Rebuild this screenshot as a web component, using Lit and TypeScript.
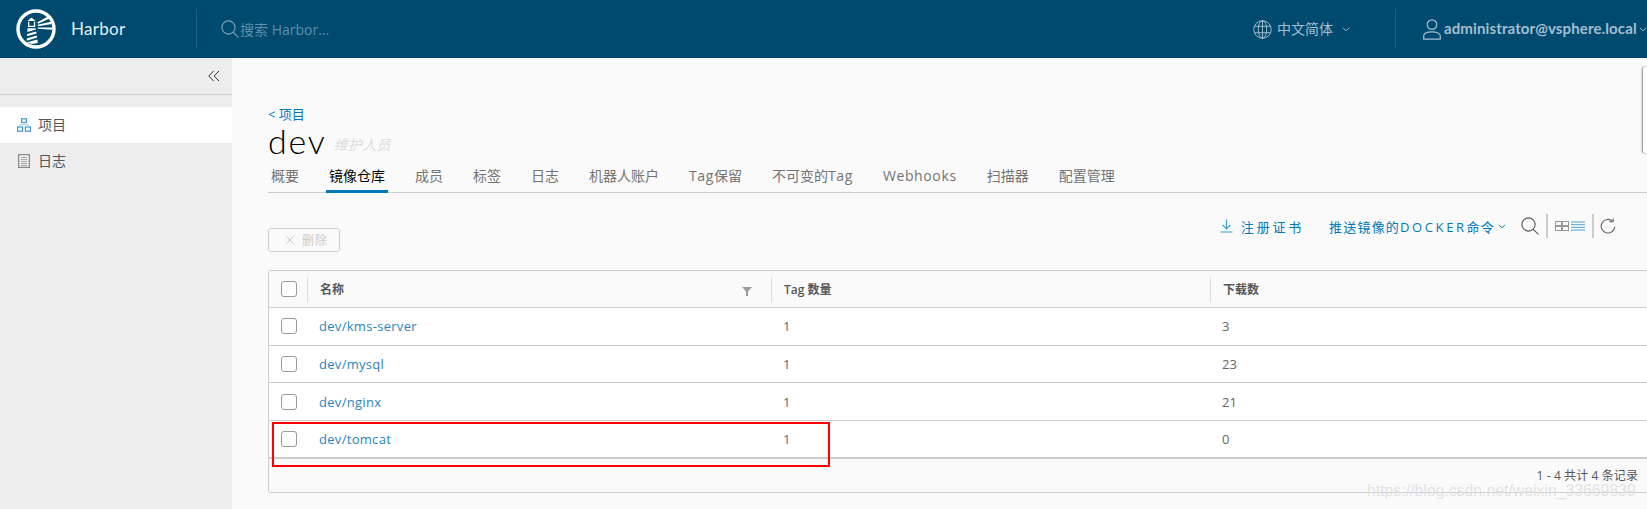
import { LitElement, html, css, svg } from "lit";
import { customElement } from "lit/decorators.js";

const logo = svg`<svg class="logo" width="40" height="40" viewBox="0 0 40 40">
  <circle cx="20" cy="20" r="18" fill="none" stroke="#fff" stroke-width="3.4"/>
  <g fill="#fff">
    <path d="M15.5 8.4 L19.6 12 H11.4 Z"/>
    <path d="M12 12.8 h1.3 v4 h4.6 v-4 h1.3 v5.2 h-7.2 Z"/>
    <path d="M11.6 19.2 h8 l0.3 1.4 l-8.5 2.4 Z"/>
    <path d="M11.2 25 l9 -2.6 l0.4 2 l-9.6 2.8 Z"/>
    <path d="M10.8 29.4 l10 -3 l0.4 2.2 l-10.6 3.1 Z"/>
    <path d="M10.4 33.6 l11 -3.2 l0.4 3.6 l-6 1 Z"/>
    <path d="M21.4 13.2 l10.6 -5.8 l1.6 2 l-11.6 5.4 Z"/>
    <path d="M21.6 15.8 l13.4 -3 l0.8 2.2 l-13.8 2.2 Z"/>
    <path d="M21.6 18.4 l14.6 0 l0 2.4 l-14.4 -1 Z"/>
  </g>
</svg>`;

const searchIcon = (cls: string) => svg`<svg class=${cls} viewBox="0 0 18 18" fill="none" stroke="currentColor" stroke-width="1.1">
  <circle cx="7.5" cy="7.5" r="6.6"/><path d="M12.3 12.3 L17.4 17.4"/>
</svg>`;

const chevron = svg`<svg class="chev" viewBox="0 0 8 5" fill="none" stroke="currentColor" stroke-width="1"><path d="M1 .8 L4 3.8 L7 .8"/></svg>`;

const repos: [string, string, string][] = [
  ["dev/kms-server", "1", "3"],
  ["dev/mysql", "1", "23"],
  ["dev/nginx", "1", "21"],
  ["dev/tomcat", "1", "0"],
];

const tabs = ["概要", "镜像仓库", "成员", "标签", "日志", "机器人账户", "Tag保留", "不可变的Tag", "Webhooks", "扫描器", "配置管理"];

const tabLabel = (t: string) =>
  t.split(/([A-Za-z]+)/).map((p) => (/^[A-Za-z]+$/.test(p) ? html`<span class="lat">${p}</span>` : p));

@customElement("app-root")
export class AppRoot extends LitElement {
  static styles = css`
    :host { display: block; width: 1647px; height: 509px; overflow: hidden; position: relative; font-family: "Open Sans", "Noto Sans CJK SC", sans-serif; background: #fafafa; }
    * { box-sizing: border-box; }
    .top { height: 58px; background: #004a70; display: flex; align-items: center; color: #fff; }
    .brand { width: 197px; height: 40px; display: flex; align-items: center; padding-left: 16px; border-right: 1px solid #1b5f82; }
    .brand-name { margin-left: 15px; font-size: 17px; color: #e3eff5; letter-spacing: .3px; font-family: Lato, sans-serif; padding-bottom: 1px; }
    .logo { display: block; }
    .search { display: flex; align-items: center; margin-left: 24px; color: #5f8fa9; font-size: 14px; }
    .search-icon { width: 18px; height: 18px; margin-right: 1px; color: #7fa5ba; }
    .lang { margin-left: auto; width: 142px; display: flex; align-items: center; color: #a3bfcf; font-size: 14px; }
    .lang > span { padding-bottom: 2px; }
    .globe { width: 19px; height: 19px; margin-right: 5px; }
    .chev { width: 8px; height: 5px; display: block; }
    .lang .chev { margin-left: 9px; }
    .user { width: 252px; height: 40px; border-left: 1px solid #1b5f82; padding-left: 27px; display: flex; align-items: center; color: #a3bfcf; font-size: 14px; white-space: nowrap; }
    .user-icon { width: 18px; height: 21px; margin-right: 3px; flex: none; }
    .user .chev { margin-left: 2px; flex: none; }
    .uname { font-family: Lato, sans-serif; font-weight: 700; font-size: 15px; letter-spacing: .12px; padding-bottom: 3px; }

    .body { display: flex; height: 451px; }
    .side { width: 232px; flex: none; background: #ededed; }
    .collapse { height: 37px; border-bottom: 1px solid #ccc; display: flex; align-items: center; justify-content: flex-end; padding: 0 12px 0 0; margin-bottom: 12px; }
    .collapse svg { width: 12px; height: 12px; color: #333; }
    .nav { height: 36px; display: flex; align-items: center; padding-left: 17px; font-size: 14px; color: #565656; }
    .nav.on { background: #fff; }
    .nav svg { width: 14px; height: 14px; margin-right: 7px; margin-bottom: 1px; }
    .nav span { padding-bottom: 3px; }

    .main { flex: 1; min-width: 0; padding: 48px 0 0 36px; position: relative; overflow: hidden; }
    .back { font-size: 13px; line-height: 16px; color: #0079b8; height: 18px; }
    .title { display: flex; align-items: flex-start; height: 35px; }
    h1 { margin: 0; font: 300 34px/33px Lato, sans-serif; color: #000; letter-spacing: 1.8px; }
    .role { align-self: flex-end; margin: 0 0 4px 7px; font-size: 14px; line-height: 20px; letter-spacing: .3px; font-style: italic; color: #ddd; }
    .tabs { display: flex; border-bottom: 1px solid #ccc; height: 34px; }
    .tab { padding: 0 3px; margin-right: 24px; font-size: 14px; line-height: 33px; color: #747474; height: 34px; white-space: nowrap; }
    .tab.on { color: #000; border-bottom: 3px solid #0079b8; }
    .lat { letter-spacing: .62px; }
    .tool { display: flex; justify-content: space-between; padding: 19px 31px 0 0; height: 77px; }
    .del { margin-top: 16px; width: 72px; height: 24px; border: 1px solid #ccc; border-radius: 3px; display: flex; align-items: center; padding-left: 16px; font-size: 12px; letter-spacing: 1px; color: #ccc; }
    .del svg { width: 10px; height: 10px; margin-right: 7px; }
    .acts { display: flex; align-items: center; height: 28px; color: #0079b8; font-size: 13px; white-space: nowrap; }
    .dl { width: 13px; height: 14px; margin-right: 8px; color: #3d9bd0; }
    .reg { letter-spacing: 2.8px; margin-right: 25px; }
    .push { letter-spacing: 1.2px; }
    .dock { letter-spacing: 2.6px; }
    .acts .chev { margin: 0 0 0 3px; }
    .s2 { width: 18px; height: 18px; color: #565656; margin-left: 15px; }
    .vsep { width: 2px; height: 24px; background: #ccc; margin: 0 7px; }
    .vsep.b { margin-right: 6px; }
    .grid-i { width: 14px; height: 10px; color: #999; }
    .list-i { width: 14px; height: 10px; margin-left: 2px; color: #4fa3d6; }
    .ref { width: 16px; height: 16px; color: #666; }

    .table { margin-right: -10px; border: 1px solid #ccc; border-radius: 3px; height: 223px; overflow: hidden; font-size: 13px; }
    .row { display: grid; grid-template-columns: 38px 464px 439px 1fr; height: 37.67px; background: #fff; border-bottom: 1px solid #ccc; align-items: center; color: #666; }
    .row.head { height: 37px; background: #fafafa; font-weight: 600; font-size: 12px; color: #565656; }
    .row.last { height: 38px; border-bottom-width: 2px; }
    .cell { height: 100%; display: flex; align-items: center; padding-left: 12px; position: relative; }
    .head .cell { height: 25px; border-left: 1px solid #ddd; }
    .head .cell.first { border-left: none; }
    .box { width: 16px; height: 16px; border: 1px solid #9a9a9a; border-radius: 3px; background: #fff; }
    .link { color: #2a84bc; letter-spacing: .3px; }
    .filter { position: absolute; right: 19px; top: 10px; width: 10px; height: 9px; color: #999; }
    .foot { height: 33px; background: #fafafa; text-align: right; font-size: 12px; letter-spacing: .1px; line-height: 33px; padding-right: 18px; color: #565656; }

    .mark { position: absolute; left: 1367px; top: 482px; font: 15.8px/18px "Liberation Sans", sans-serif; color: rgba(190,190,190,.45); white-space: nowrap; text-shadow: 0 0 1px rgba(255,255,255,.9); }
    .redbox { position: absolute; left: 272px; top: 422px; width: 558px; height: 45px; border: 2px solid #f00; pointer-events: none; }
    .peek { position: absolute; left: 1643px; top: 67px; width: 20px; height: 86px; background: #fff; box-shadow: -1px 0 2px rgba(0,0,0,.45); border-radius: 2px; }
  `;

  render() {
    return html`
      <div class="top">
        <div class="brand">${logo}<span class="brand-name">Harbor</span></div>
        <div class="search">${searchIcon("search-icon")}<span>搜索 Harbor...</span></div>
        <div class="lang">
          <svg class="globe" viewBox="0 0 20 20" fill="none" stroke="currentColor" stroke-width="1">
            <circle cx="10" cy="10" r="9.2"/><ellipse cx="10" cy="10" rx="4.4" ry="9.2"/><path d="M10 .8 V19.2 M1.4 6.6 H18.6 M1.4 13.4 H18.6"/>
          </svg>
          <span>中文简体</span>${chevron}
        </div>
        <div class="user">
          <svg class="user-icon" viewBox="0 0 18 21" fill="none" stroke="currentColor" stroke-width="1.2">
            <circle cx="9" cy="5.6" r="4.8"/><path d="M.7 20.2 V17 C.7 14.6 4 12.8 9 12.8 S17.3 14.6 17.3 17 V20.2 Z"/>
          </svg>
          <span class="uname">administrator@vsphere.local</span>${chevron}
        </div>
      </div>
      <div class="body">
        <aside class="side">
          <div class="collapse">
            <svg viewBox="0 0 12 12" fill="none" stroke="currentColor" stroke-width="1"><path d="M5.6 1 L.8 6 L5.6 11 M11 1 L6.2 6 L11 11"/></svg>
          </div>
          <div class="nav on">
            <svg viewBox="0 0 14 14" fill="none" stroke="#3f97cf" stroke-width="1.2"><rect x="4.6" y=".8" width="4.8" height="3.6"/><rect x=".6" y="9" width="5" height="4.2"/><rect x="8.4" y="9" width="5" height="4.2"/><path d="M7 4.4 V6.6 M3 9 V6.6 H11 V9" stroke="#a9cfe8"/></svg>
            <span>项目</span>
          </div>
          <div class="nav">
            <svg viewBox="0 0 14 14" fill="none" stroke="#8a8a8a"><rect x="1.6" y=".6" width="10.8" height="12.8" stroke-width="1.2"/><path d="M4 3.5 H10 M4 5.5 H10 M4 7.5 H10 M4 9.5 H10 M4 11.5 H10" stroke="#aaa" stroke-width="1"/></svg>
            <span>日志</span>
          </div>
        </aside>
        <main class="main">
          <div class="back">&lt; 项目</div>
          <div class="title"><h1>dev</h1><span class="role">维护人员</span></div>
          <div class="tabs">
            ${tabs.map((t, i) => html`<div class="tab ${i === 1 ? "on" : ""}">${tabLabel(t)}</div>`)}
          </div>
          <div class="tool">
            <div class="del">
              <svg viewBox="0 0 10 10" fill="none" stroke="#ccc" stroke-width="1"><path d="M1 1 L9 9 M9 1 L1 9"/></svg>
              <span>删除</span>
            </div>
            <div class="acts">
              <svg class="dl" viewBox="0 0 13 14" fill="none" stroke="currentColor" stroke-width="1.2"><path d="M6.5 .5 V9.5 M2.5 5.8 L6.5 9.8 L10.5 5.8 M.5 13 H12.5"/></svg>
              <span class="reg">注册证书</span>
              <span class="push">推送镜像的<span class="dock">DOCKER</span>命令</span>${chevron}
              ${searchIcon("s2")}
              <div class="vsep"></div>
              <svg class="grid-i" viewBox="0 0 14 10" fill="none" stroke="currentColor" stroke-width="1"><rect x=".5" y=".5" width="6" height="4"/><rect x="7.5" y=".5" width="6" height="4"/><rect x=".5" y="5.5" width="6" height="4"/><rect x="7.5" y="5.5" width="6" height="4"/></svg>
              <svg class="list-i" viewBox="0 0 14 10" fill="none" stroke="currentColor" stroke-width="1"><path d="M0 1 H14 M0 3.7 H14 M0 6.4 H14 M0 9.1 H14"/></svg>
              <div class="vsep b"></div>
              <svg class="ref" viewBox="0 0 16 16" fill="none" stroke="currentColor" stroke-width="1.1"><path d="M12.6 3.2 A6.8 6.8 0 1 0 14.8 8.6"/><path d="M9.2 3.8 H13.2 V.4"/></svg>
            </div>
          </div>
          <div class="table">
            <div class="row head">
              <div class="cell first"><div class="box"></div></div>
              <div class="cell">名称
                <svg class="filter" viewBox="0 0 10 9" fill="currentColor"><path d="M0 0 H10 L6 4.4 V9 H4 V4.4 Z"/></svg>
              </div>
              <div class="cell">Tag 数量</div>
              <div class="cell">下载数</div>
            </div>
            ${repos.map((r, i) => html`
              <div class="row ${i === 3 ? "last" : ""}">
                <div class="cell first"><div class="box"></div></div>
                <div class="cell"><span class="link">${r[0]}</span></div>
                <div class="cell">${r[1]}</div>
                <div class="cell">${r[2]}</div>
              </div>`)}
            <div class="foot">1 - 4 共计 4 条记录</div>
          </div>
        </main>
      </div>
      <div class="peek"></div>
      <div class="redbox"></div>
      <div class="mark">https://blog.csdn.net/weixin_33669839</div>
    `;
  }
}
